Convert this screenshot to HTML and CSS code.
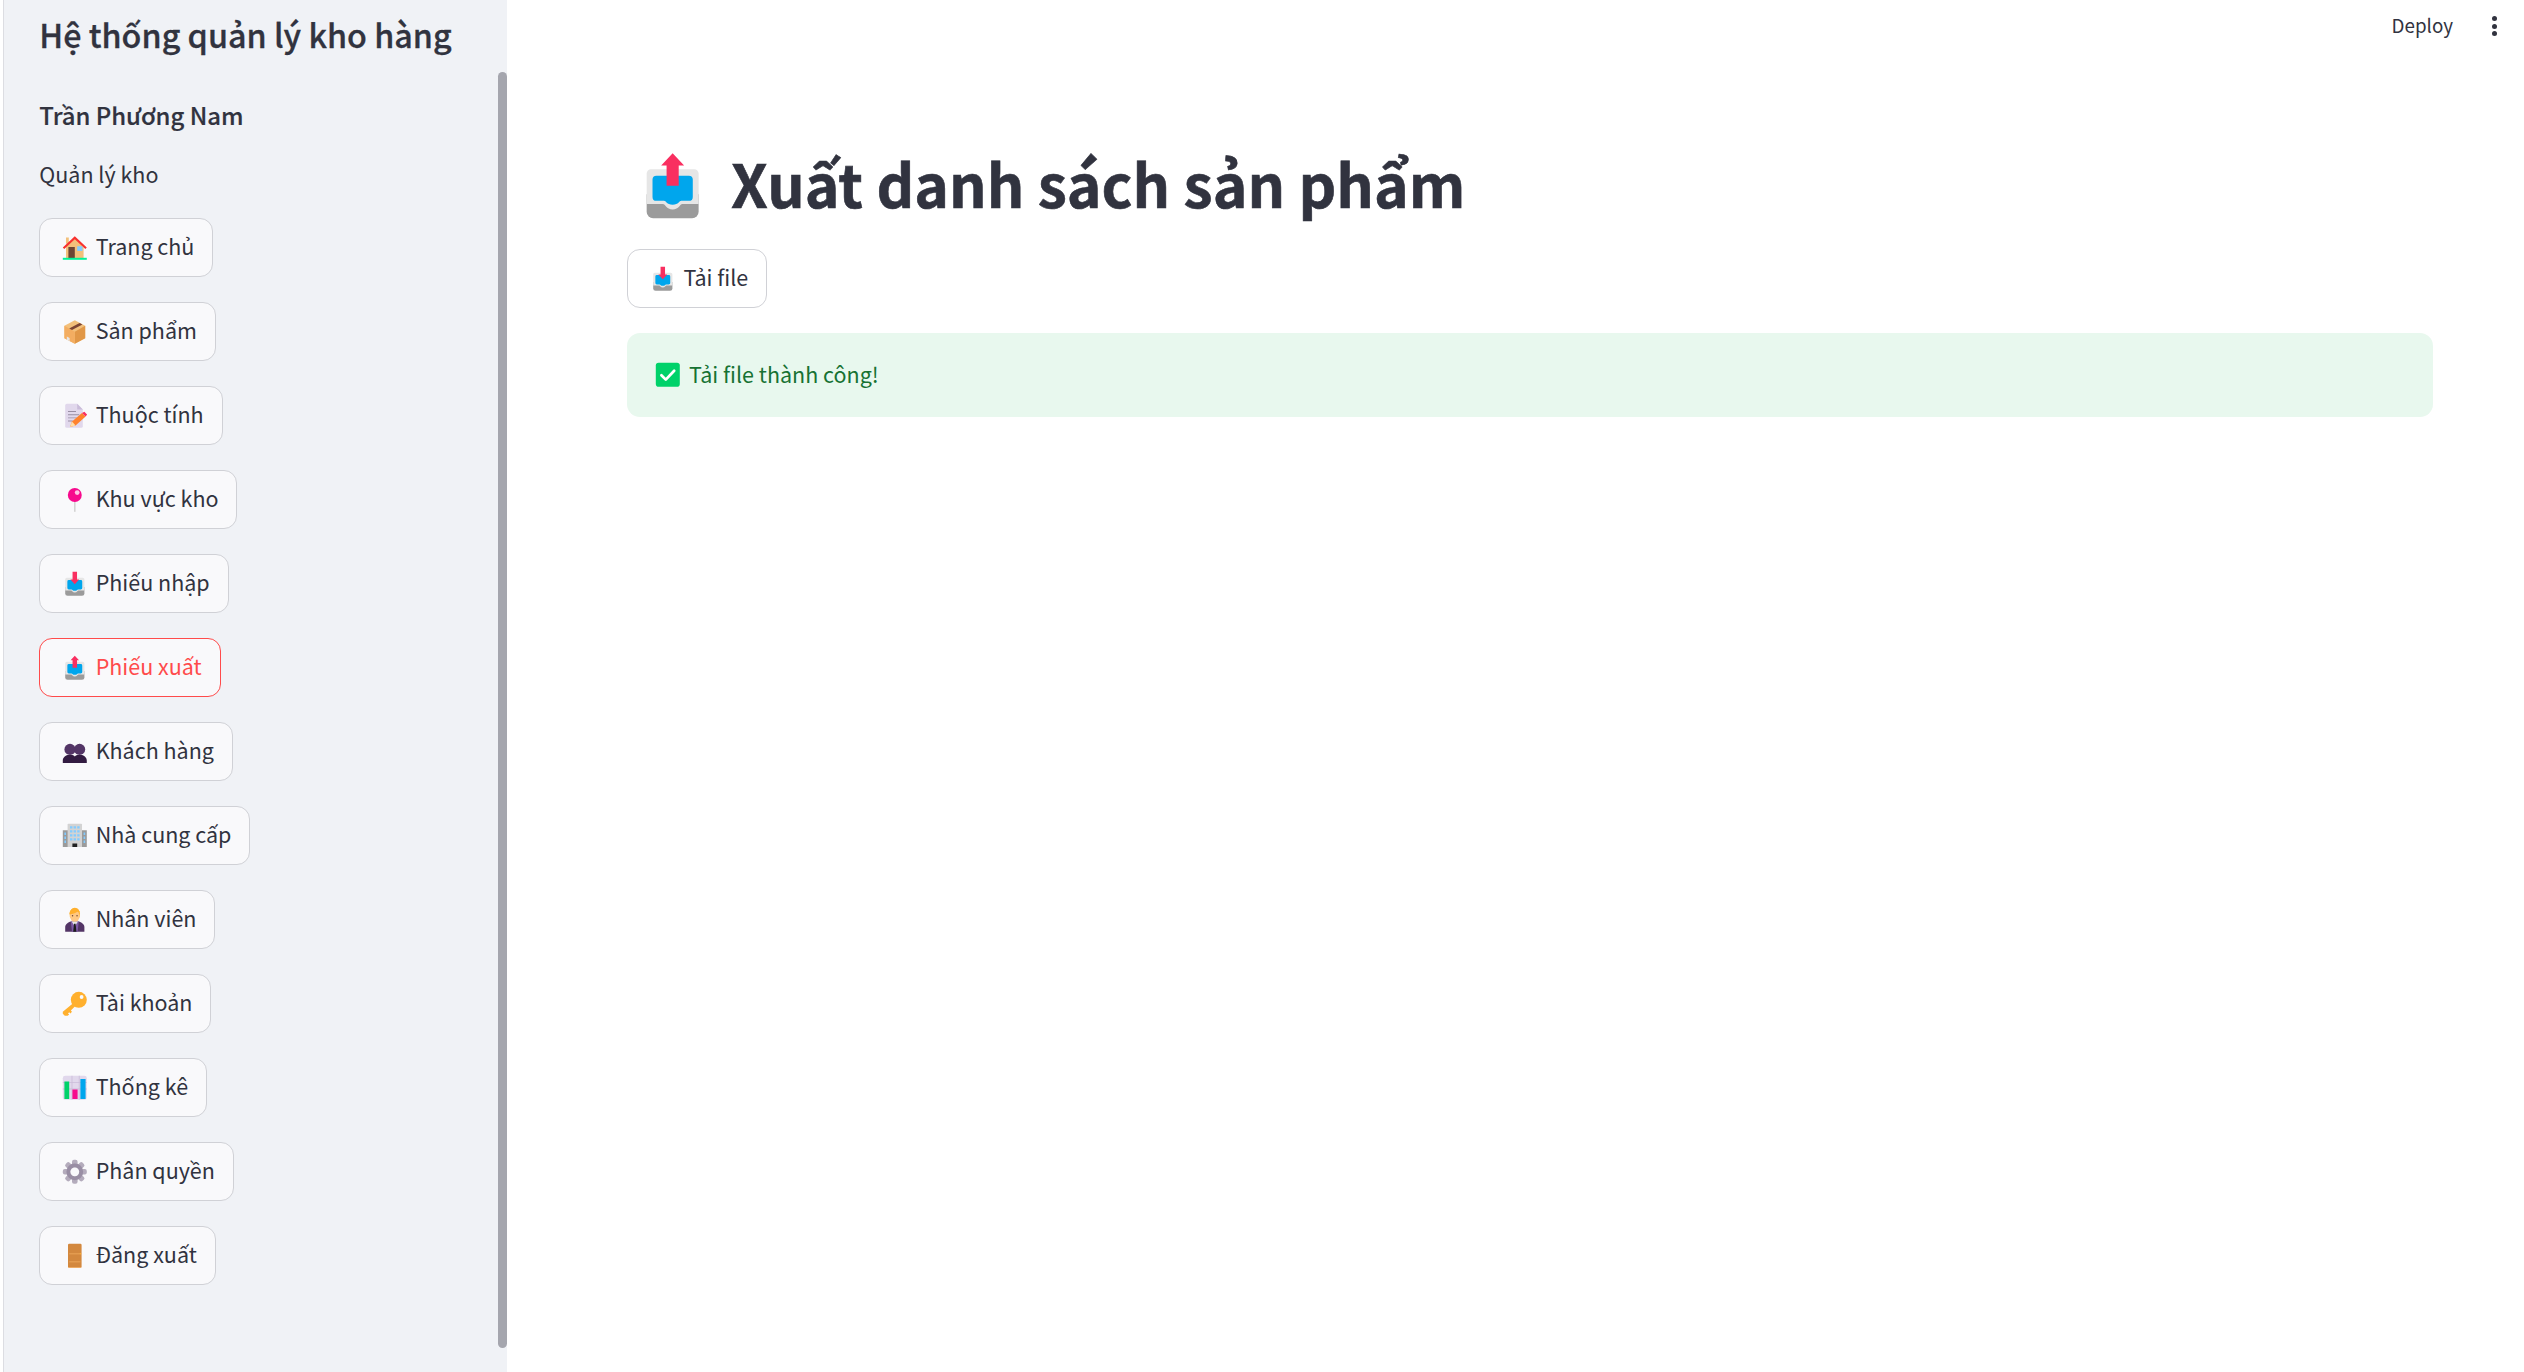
FILE: index.html
```html
<!DOCTYPE html>
<html lang="vi">
<head>
<meta charset="utf-8">
<title>Xuất danh sách sản phẩm</title>
<link rel="stylesheet" href="styles.css">
</head>
<body>
<svg class="defs" aria-hidden="true">
  <symbol id="i-house" viewBox="0 0 32 32">
    <path fill="#f3c07b" d="M5 3h3.500v8H5z"/>
    <path fill="#f3c07b" d="M5 14 16 4l11 10v15H5z"/>
    <path fill="#f8312f" d="M16 1.500 31 15.600l-1.800 2L16 5.400 2.800 17.600l-1.800-2z"/>
    <path fill="#6d4534" d="M8 15h8v14H8z"/>
    <path fill="#83cbff" d="M19 14h6.500v6H19z"/>
    <path fill="#00f397" d="M1 28.500h30V31H1z"/>
  </symbol>
  <symbol id="i-box" viewBox="0 0 32 32">
    <path fill="#f3c07b" d="M3 8.500 16 1.500l13 7v15.500L16 31 3 24z"/>
    <path fill="#e19747" d="M16 16 29 8.500V24l-13 7z"/>
    <path fill="#f3ad61" d="M3 8.500 16 16v15L3 24z"/>
    <path fill="#7d4533" d="m9 12 13-7 3.500 1.800-13 7z"/>
    <path fill="#e6e6e6" d="m6 22 3.500 1.800v4L6 26z"/>
  </symbol>
  <symbol id="i-memo" viewBox="0 0 32 32">
    <path fill="#e1d8ec" d="M4 3a2 2 0 0 1 2-2h13l7 7v21a2 2 0 0 1-2 2H6a2 2 0 0 1-2-2z"/>
    <path fill="#cabcd9" d="m19 1 7 7h-7z"/>
    <path fill="#998ea4" d="M7.500 10h10v1.200h-10zM7.500 14h14v1.200h-14zM7.500 18h11v1.200h-11zM7.500 22h6v1.200h-6z"/>
    <path fill="#ff822d" d="M25 12.500 29.500 17 17 28l-7 2 2.500-7z"/>
    <path fill="#ffdea7" d="m10 30 2.500-7 4.500 5z"/>
    <path fill="#f92f60" d="m25 12.500 3-1.500 3.500 3.500-2 2.500z"/>
  </symbol>
  <symbol id="i-pin" viewBox="0 0 32 32">
    <path fill="#d3d3d3" d="M15 16h2v15h-2z"/>
    <circle cx="16" cy="10" r="8.700" fill="#f70a8d"/>
    <circle cx="19" cy="7" r="3" fill="#ffc4e3"/>
  </symbol>
  <symbol id="i-in" viewBox="0 0 32 32">
    <path fill="#9b9b9b" d="M4 20h24v8a3 3 0 0 1-3 3H7a3 3 0 0 1-3-3z"/>
    <path fill="#e6e6e6" d="M6 8.400h20a2 2 0 0 1 2 2V24.500h-7.500c-1.200 0-1.500 2.500-4.500 2.500s-3.300-2.500-4.500-2.500H4V10.400a2 2 0 0 1 2-2z"/>
    <path fill="#00a6ed" d="M8.500 11.400h15a1.800 1.800 0 0 1 1.800 1.800v8a1.800 1.800 0 0 1-1.800 1.800h-3.500c-1 0-1.200 1.800-4 1.800s-3-1.800-4-1.800H8.500a1.800 1.800 0 0 1-1.800-1.800v-8a1.800 1.800 0 0 1 1.800-1.800z"/>
    <path fill="#f92f60" d="M13.200 1h5.600v9.500H21.500L16 16.500l-5.500-6h2.700z"/>
  </symbol>
  <symbol id="i-out" viewBox="0 0 32 32">
    <path fill="#9b9b9b" d="M4 20h24v8a3 3 0 0 1-3 3H7a3 3 0 0 1-3-3z"/>
    <path fill="#e6e6e6" d="M6 8.400h20a2 2 0 0 1 2 2V24.500h-7.500c-1.200 0-1.500 2.500-4.500 2.500s-3.300-2.500-4.500-2.500H4V10.400a2 2 0 0 1 2-2z"/>
    <path fill="#00a6ed" d="M8.500 11.400h15a1.800 1.800 0 0 1 1.800 1.800v8a1.800 1.800 0 0 1-1.800 1.800h-3.500c-1 0-1.200 1.800-4 1.800s-3-1.800-4-1.800H8.500a1.800 1.800 0 0 1-1.800-1.800v-8a1.800 1.800 0 0 1 1.800-1.800z"/>
    <path fill="#f92f60" d="M16 1l5.300 5.700h-2.500v9.300h-5.600V6.700h-2.500z"/>
  </symbol>
  <symbol id="i-busts" viewBox="0 0 32 32">
    <circle cx="10" cy="13" r="7" fill="#533566"/>
    <circle cx="22" cy="13" r="7" fill="#533566"/>
    <path fill="#321b41" d="M1 27c0-4 3-6 6-7h5c1 0 3 .500 4 2 1-1.500 3-2 4-2h5c3 1 6 3 6 7v3H1z"/>
  </symbol>
  <symbol id="i-office" viewBox="0 0 32 32">
    <path fill="#9b9b9b" d="M1 9h30v21H1z"/>
    <path fill="#d3d3d3" d="M7 2a1 1 0 0 1 1-1h16a1 1 0 0 1 1 1v28H7z"/>
    <path fill="#83cbff" d="M10 4h3v3h-3zM14.500 4h3v3h-3zM19 4h3v3h-3zM10 9h3v3h-3zM14.500 9h3v3h-3zM19 9h3v3h-3zM10 14h3v3h-3zM14.500 14h3v3h-3zM19 14h3v3h-3zM10 19h3v3h-3zM14.500 19h3v3h-3zM19 19h3v3h-3zM3 12h2v3H3zM3 17h2v3H3zM3 22h2v3H3zM27 12h2v3h-2zM27 17h2v3h-2zM27 22h2v3h-2z"/>
    <path fill="#212121" d="M13 25.500h6V30h-6z"/>
  </symbol>
  <symbol id="i-worker" viewBox="0 0 32 32">
    <path fill="#533566" d="M4 31v-6c0-4 4-6 7-7h10c3 1 7 3 7 7v6z"/>
    <path fill="#7d5aa6" d="M11 18h10l-1.500 13h-7z"/>
    <path fill="#e6e6e6" d="M12 18h8l-4 6z"/>
    <path fill="#1c1c1c" d="M15 21h2l1 10h-4z"/>
    <path fill="#ffb02e" d="M9.500 8a6.500 6.500 0 0 1 13 0l-.5 5H10z"/>
    <ellipse cx="16" cy="11.500" rx="6" ry="7" fill="#ffc883"/>
    <path fill="#ffb02e" d="M9.500 9c3 0 8-1 10.500-4 2 1 2.500 2.500 2.500 4.500 0-5-2.500-8.500-6.500-8.500S9.500 5 9.500 9z"/>
    <circle cx="13.200" cy="11" r=".9" fill="#6d4534"/>
    <circle cx="18.800" cy="11" r=".9" fill="#6d4534"/>
  </symbol>
  <symbol id="i-key" viewBox="0 0 32 32">
    <circle cx="21" cy="11" r="10" fill="#ffb02e"/>
    <path fill="#ffb02e" d="M15 14.500 18 17.500 11 24.500 12.500 26 10.500 28 9 26.500 7.500 28 9 29.500 7 31H3.500L1 28.500V26z"/>
    <circle cx="24.500" cy="7.500" r="2.400" fill="#f9f9fb"/>
  </symbol>
  <symbol id="i-chart" viewBox="0 0 32 32">
    <rect x="1" y="1" width="30" height="30" rx="3" fill="#e1d8ec"/>
    <path fill="#cabcd9" d="M1 9h30v1H1zM1 17h30v1H1zM12 1h1v30h-1zM21 1h1v30h-1z"/>
    <path fill="#00d26a" d="M3 8h6v22H3z"/>
    <path fill="#f70a8d" d="M13 18h6.500v12H13z"/>
    <path fill="#00a6ed" d="M23 5h6.500v25H23z"/>
  </symbol>
  <symbol id="i-gear" viewBox="0 0 32 32">
    <g fill="#b4acbc">
      <rect x="12.500" y="1" width="7" height="30" rx="2.500"/>
      <rect x="12.500" y="1" width="7" height="30" rx="2.500" transform="rotate(45 16 16)"/>
      <rect x="12.500" y="1" width="7" height="30" rx="2.500" transform="rotate(90 16 16)"/>
      <rect x="12.500" y="1" width="7" height="30" rx="2.500" transform="rotate(135 16 16)"/>
    </g>
    <circle cx="16" cy="16" r="8" fill="none" stroke="#998ea4" stroke-width="5"/>
    <circle cx="16" cy="16" r="5.500" fill="#f9f9fb"/>
  </symbol>
  <symbol id="i-door" viewBox="0 0 32 32">
    <rect x="7.500" y="1" width="17" height="30" rx="1.500" fill="#d3883e"/>
    <path fill="#f3ad61" d="M9 13h14v1H9zM9 23h14v1H9zM8 30h16v1H8z"/>
    <circle cx="23" cy="13.500" r=".9" fill="#ffb02e"/>
  </symbol>
  <symbol id="i-check" viewBox="0 0 32 32">
    <rect x="1" y="1" width="30" height="30" rx="3.500" fill="#00d26a"/>
    <path fill="none" stroke="#fff" stroke-width="3.400" stroke-linecap="round" stroke-linejoin="round" d="m8 16.500 5.500 5.500L24 11"/>
  </symbol>
</svg>

<div class="app">
  <aside class="sidebar">
    <h2 class="side-title">Hệ thống quản lý kho hàng</h2>
    <div class="side-content">
      <h3 class="user-name">Trần Phương Nam</h3>
      <p class="role">Quản lý kho</p>
      <nav class="nav">
        <a class="btn"><svg class="emoji"><use href="#i-house"/></svg><span class="label">Trang chủ</span></a>
        <a class="btn"><svg class="emoji"><use href="#i-box"/></svg><span class="label">Sản phẩm</span></a>
        <a class="btn"><svg class="emoji"><use href="#i-memo"/></svg><span class="label">Thuộc tính</span></a>
        <a class="btn"><svg class="emoji"><use href="#i-pin"/></svg><span class="label">Khu vực kho</span></a>
        <a class="btn"><svg class="emoji"><use href="#i-in"/></svg><span class="label">Phiếu nhập</span></a>
        <a class="btn active"><svg class="emoji"><use href="#i-out"/></svg><span class="label">Phiếu xuất</span></a>
        <a class="btn"><svg class="emoji"><use href="#i-busts"/></svg><span class="label">Khách hàng</span></a>
        <a class="btn"><svg class="emoji"><use href="#i-office"/></svg><span class="label">Nhà cung cấp</span></a>
        <a class="btn"><svg class="emoji"><use href="#i-worker"/></svg><span class="label">Nhân viên</span></a>
        <a class="btn"><svg class="emoji"><use href="#i-key"/></svg><span class="label">Tài khoản</span></a>
        <a class="btn"><svg class="emoji"><use href="#i-chart"/></svg><span class="label">Thống kê</span></a>
        <a class="btn"><svg class="emoji"><use href="#i-gear"/></svg><span class="label">Phân quyền</span></a>
        <a class="btn"><svg class="emoji"><use href="#i-door"/></svg><span class="label">Đăng xuất</span></a>
      </nav>
    </div>
    <div class="scrollbar"></div>
  </aside>

  <main class="main">
    <header class="topbar">
      <span class="deploy">Deploy</span>
      <span class="kebab"><i></i><i></i><i></i></span>
    </header>
    <div class="content">
      <h1 class="page-title"><svg class="title-emoji"><use href="#i-out"/></svg><span class="title-text">Xuất danh sách sản phẩm</span></h1>
      <a class="btn btn-main"><svg class="emoji"><use href="#i-in"/></svg><span class="label">Tải file</span></a>
      <div class="alert"><svg class="alert-icon"><use href="#i-check"/></svg><span class="label">Tải file thành công!</span></div>
    </div>
  </main>
</div>
</body>
</html>
```

FILE: styles.css
```css
* { box-sizing: border-box; }
html, body { margin: 0; height: 100%; }
body {
  background: #fff;
  color: #31333f;
  font-family: "Noto Sans CJK SC", "Noto Sans", sans-serif;
  font-size: 21.500px;
  overflow: hidden;
}
.defs { width: 0; height: 0; display: block; overflow: hidden; }
.app { display: flex; height: 1372px; }

.sidebar {
  width: 507px;
  flex: none;
  height: 100%;
  background: #f0f2f6;
  border-left: 3px solid #fff;
  box-shadow: inset 1px 0 0 #dcdde2;
  padding: 0 0 0 36.300px;
  position: relative;
}
.side-title {
  margin: 0;
  padding-top: 10px;
  font-size: 32.300px;
  line-height: 48px;
  font-weight: 500;
  -webkit-text-stroke: 0.3px #31333f;
  white-space: nowrap;
}
.side-content { padding-top: 37px; }
.user-name {
  margin: 0;
  font-size: 23.900px;
  line-height: 40px;
  font-weight: 500;
  -webkit-text-stroke: 0.2px #31333f;
}
.role {
  margin: 19px 0 0;
  font-size: 21.500px;
  line-height: 40px;
}
.nav {
  margin-top: 24px;
  display: flex;
  flex-direction: column;
  align-items: flex-start;
  gap: 25px;
}
.scrollbar {
  position: absolute;
  right: 0;
  top: 72px;
  width: 9px;
  height: 1276px;
  border-radius: 5px;
  background: #a5a6ae;
}

.btn {
  display: inline-flex;
  align-items: center;
  height: 59px;
  padding: 0 18px 0 21.600px;
  border: 1.500px solid #d0d1d6;
  border-radius: 13px;
  background: #f9f9fb;
  font-size: 21.500px;
  line-height: 40px;
  white-space: nowrap;
  color: #31333f;
}
.btn.active { border-color: #ff4b4b; color: #ff4b4b; }
.btn-main { background: #fff; }
.emoji { width: 25.600px; height: 25.600px; flex: none; margin-right: 8.200px; }
.label { margin-bottom: 3px; }

.main { flex: 1; min-width: 0; display: flex; flex-direction: column; }
.topbar {
  display: flex;
  justify-content: flex-end;
  align-items: center;
  height: 52px;
  padding-right: 27px;
}
.deploy { font-size: 18.800px; line-height: 46px; margin: 0 39px 3px 0; }
.kebab { display: flex; flex-direction: column; gap: 2.500px; }
.kebab i { display: block; width: 5px; height: 5px; border-radius: 50%; background: #31333f; }

.content { padding: 74px 91px 0 120px; }
.page-title {
  margin: 0;
  height: 123px;
  display: flex;
  align-items: center;
  font-size: 58.800px;
  line-height: 100px;
  font-weight: 700;
  white-space: nowrap;
}
.title-text { margin-bottom: 9px; -webkit-text-stroke: 0.6px #31333f; }
.title-emoji { width: 69.300px; height: 69.300px; margin: 0 23.500px 4px 11.300px; flex: none; }
.alert {
  margin-top: 25px;
  height: 84px;
  display: flex;
  align-items: center;
  padding-left: 27.500px;
  border-radius: 13px;
  background: #e8f8ee;
  color: #177233;
  font-size: 21.500px;
}
.alert-icon { width: 25.600px; height: 25.600px; margin-right: 9px; flex: none; }
```
